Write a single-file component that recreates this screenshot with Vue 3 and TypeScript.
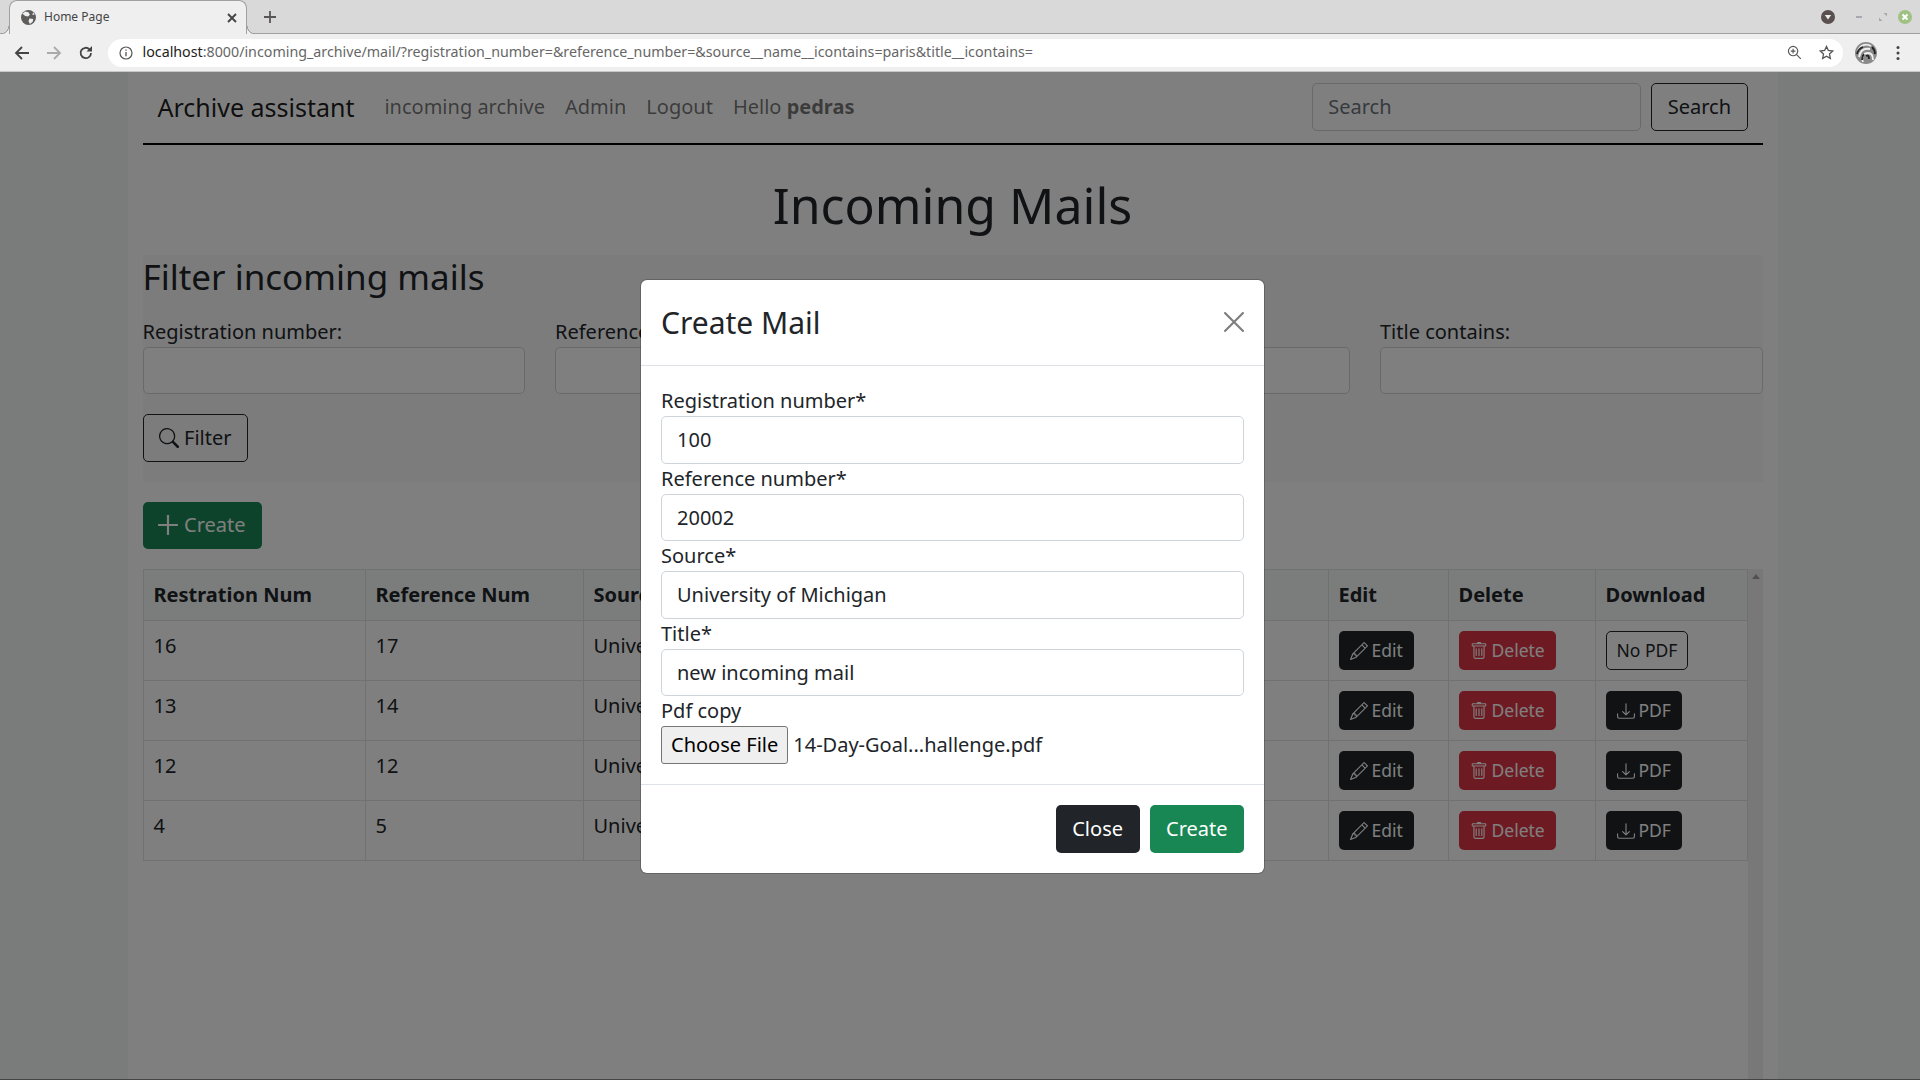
<script setup lang="ts">
interface MailRow {
  registration: string
  reference: string
  pdf: boolean
}

const mails: MailRow[] = [
  { registration: '16', reference: '17', pdf: false },
  { registration: '13', reference: '14', pdf: true },
  { registration: '12', reference: '12', pdf: true },
  { registration: '4', reference: '5', pdf: true },
]

const filterLabels = ['Registration number:', 'Reference number:', 'Source contains:', 'Title contains:']

const url = 'localhost:8000/incoming_archive/mail/?registration_number=&reference_number=&source__name__icontains=paris&title__icontains='

const fields = [
  { label: 'Registration number*', value: '100' },
  { label: 'Reference number*', value: '20002' },
  { label: 'Source*', value: 'University of Michigan' },
  { label: 'Title*', value: 'new incoming mail' },
]
</script>

<template>
  <div class="browser">
    <div class="tabstrip">
      <div class="tab">
        <svg class="tab__globe" viewBox="0 0 16 16" width="15" height="15">
          <circle cx="8" cy="8" r="8" fill="#5f5c5c" />
          <path d="M4.500 1.500l3.500 1 1.500 2.500-2 2-3-.5-3-2.500zM9 9l4 .5-.5 3-3 2.500-1.500-3zM13 2.500l1.500 2.500-2.500 0z" fill="#efefef" />
        </svg>
        <span class="tab__title">Home Page</span>
        <svg class="tab__close" viewBox="0 0 10 10" width="10" height="10">
          <path d="M1 1l8 8M9 1l-8 8" stroke="#444" stroke-width="1.900" />
        </svg>
      </div>
      <svg class="newtab" viewBox="0 0 12 12" width="12" height="12">
        <path d="M6 0v12M0 6h12" stroke="#5a5555" stroke-width="1.800" />
      </svg>
      <div class="winbtns">
        <svg class="winbtns__menu" viewBox="0 0 14 14" width="14" height="14">
          <circle cx="7" cy="7" r="7" fill="#5b5050" />
          <path d="M3.800 5h6.400L7 9.600z" fill="#eee" />
        </svg>
        <span class="winbtns__min" />
        <svg class="winbtns__max" viewBox="0 0 8 8" width="8" height="8">
          <path d="M0 8V4.500L3.500 8zM8 0v3.500L4.500 0z" fill="#a8a8b0" />
        </svg>
        <svg viewBox="0 0 14 14" width="14" height="14">
          <circle cx="7" cy="7" r="7" fill="#9fc283" />
          <path d="M4.500 4.500l5 5M9.500 4.500l-5 5" stroke="#fff" stroke-width="2" />
        </svg>
      </div>
    </div>

    <div class="toolbar">
      <svg class="tool" viewBox="0 0 16 16" width="16" height="16">
        <path d="M15 8H2M8 2L2 8l6 6" fill="none" stroke="#444" stroke-width="1.800" />
      </svg>
      <svg class="tool" viewBox="0 0 16 16" width="16" height="16">
        <path d="M1 8h13M8 2l6 6-6 6" fill="none" stroke="#aaa" stroke-width="1.800" />
      </svg>
      <svg class="tool" viewBox="0 0 16 16" width="16" height="16">
        <path d="M13 8a5.200 5.200 0 1 1-1.500-3.700" fill="none" stroke="#444" stroke-width="1.800" />
        <path d="M14 1v5.500H8.500z" fill="#444" />
      </svg>
      <div class="omnibox">
        <svg viewBox="0 0 14 14" width="14" height="14">
          <circle cx="7" cy="7" r="6" fill="none" stroke="#555" stroke-width="1.200" />
          <path d="M7 6v4.200M7 3.400v1.400" stroke="#555" stroke-width="1.300" />
        </svg>
        <span class="omnibox__url"><span class="omnibox__host">localhost</span>{{ url.slice(9) }}</span>
        <svg class="omnibox__zoom" viewBox="0 0 16 16" width="15" height="15">
          <circle cx="6.500" cy="6.500" r="5" fill="none" stroke="#555" stroke-width="1.200" />
          <path d="M10.200 10.200l4.500 4.500M6.500 4v5M4 6.500h5" stroke="#555" stroke-width="1.200" />
        </svg>
        <svg viewBox="0 0 16 16" width="15" height="15">
          <path d="M8 1.500l2 4.300 4.700.6-3.500 3.200.9 4.700L8 12l-4.100 2.300.9-4.700L1.300 6.400 6 5.800z" fill="none" stroke="#555" stroke-width="1.400" />
        </svg>
      </div>
      <svg class="avatar" viewBox="0 0 22 22" width="22" height="22">
        <circle cx="11" cy="11" r="11" fill="#8a8a8a" />
        <path d="M3 9c2-6 8-8 13-5M4 15c1-6 5-9 11-8M8 20c-2-5 0-9 5-9 4 0 5 3 5 7" fill="none" stroke="#f0f0f0" stroke-width="1.800" />
        <path d="M2 12c1-4 3-6 6-7M11 14c2-1 3 0 3 3M7 18c0-3 1-5 2-6M17 5c2 2 3 4 3 7" fill="none" stroke="#222" stroke-width="1.800" />
      </svg>
      <svg class="dots" viewBox="0 0 4 16" width="4" height="16">
        <circle cx="2" cy="2.500" r="1.500" fill="#444" />
        <circle cx="2" cy="8" r="1.500" fill="#444" />
        <circle cx="2" cy="13.500" r="1.500" fill="#444" />
      </svg>
    </div>

    <div class="viewport">
      <div class="page">
        <div class="container">
          <nav class="navbar">
            <a class="navbar__brand">Archive assistant</a>
            <a class="navbar__link">incoming archive</a>
            <a class="navbar__link">Admin</a>
            <a class="navbar__link">Logout</a>
            <span class="navbar__link">Hello <b>pedras</b></span>
            <form class="navbar__search">
              <input class="control navbar__input" placeholder="Search" />
              <button type="button" class="btn btn--outline">Search</button>
            </form>
          </nav>

          <h1 class="heading">Incoming Mails</h1>

          <section class="filter">
            <h2 class="filter__title">Filter incoming mails</h2>
            <div class="filter__grid">
              <div v-for="label in filterLabels" :key="label">
                <label class="field-label">{{ label }}</label>
                <input class="control" />
              </div>
            </div>
            <button type="button" class="btn btn--outline filter__btn">
              <svg class="icon" viewBox="0 0 16 16" width="20" height="20" fill="currentColor">
                <path d="M11.742 10.344a6.500 6.500 0 1 0-1.397 1.398h-.001c.03.04.062.078.098.115l3.850 3.850a1 1 0 0 0 1.415-1.414l-3.850-3.850a1.007 1.007 0 0 0-.115-.1zM12 6.500a5.500 5.500 0 1 1-11 0 5.500 5.500 0 0 1 11 0z" />
              </svg>
              Filter
            </button>
          </section>

          <button type="button" class="btn btn--green create">
            <svg class="icon" viewBox="0 0 16 16" width="22" height="22">
              <path d="M8 .8v14.400M.8 8h14.400" stroke="currentColor" stroke-width="1.600" />
            </svg>
            Create
          </button>

          <div class="table-wrap">
            <table class="table">
              <colgroup>
                <col style="width: 222px" />
                <col style="width: 218px" />
                <col style="width: 300px" />
                <col style="width: 303px" />
                <col style="width: 142px" />
                <col style="width: 120px" />
                <col style="width: 147px" />
                <col />
              </colgroup>
              <thead>
                <tr>
                  <th>Restration Num</th>
                  <th>Reference Num</th>
                  <th>Source</th>
                  <th>Title</th>
                  <th>Detail</th>
                  <th>Edit</th>
                  <th>Delete</th>
                  <th>Download</th>
                </tr>
              </thead>
              <tbody>
                <tr v-for="mail in mails" :key="mail.registration">
                  <td>{{ mail.registration }}</td>
                  <td>{{ mail.reference }}</td>
                  <td>University of Paris</td>
                  <td>Incoming mail</td>
                  <td><button type="button" class="btn btn--sm btn--green">Email</button></td>
                  <td>
                    <button type="button" class="btn btn--sm btn--dark">
                      <svg class="icon" viewBox="0 0 16 16" width="18" height="18" fill="currentColor">
                        <path d="M12.146.146a.5.5 0 0 1 .708 0l3 3a.5.5 0 0 1 0 .708l-10 10a.5.5 0 0 1-.168.11l-5 2a.5.5 0 0 1-.65-.65l2-5a.5.5 0 0 1 .11-.168l10-10zM11.207 2.500 13.500 4.793 14.793 3.500 12.500 1.207 11.207 2.500zm1.586 3L10.500 3.207 4 9.707V10h.5a.5.5 0 0 1 .5.5v.5h.5a.5.5 0 0 1 .5.5v.5h.293l6.500-6.500zm-9.761 5.175-.106.106-1.528 3.821 3.821-1.528.106-.106A.5.5 0 0 1 5 12.500V12h-.5a.5.5 0 0 1-.5-.5V11h-.5a.5.5 0 0 1-.468-.325z" />
                      </svg>
                      Edit
                    </button>
                  </td>
                  <td>
                    <button type="button" class="btn btn--sm btn--red">
                      <svg class="icon" viewBox="0 0 16 16" width="18" height="18" fill="currentColor">
                        <path d="M5.500 5.500A.5.5 0 0 1 6 6v6a.5.5 0 0 1-1 0V6a.5.5 0 0 1 .5-.5zm2.500 0a.5.5 0 0 1 .5.5v6a.5.5 0 0 1-1 0V6a.5.5 0 0 1 .5-.5zm3 .5a.5.5 0 0 0-1 0v6a.5.5 0 0 0 1 0V6z" />
                        <path fill-rule="evenodd" d="M14.500 3a1 1 0 0 1-1 1H13v9a2 2 0 0 1-2 2H5a2 2 0 0 1-2-2V4h-.5a1 1 0 0 1-1-1V2a1 1 0 0 1 1-1H6a1 1 0 0 1 1-1h2a1 1 0 0 1 1 1h3.500a1 1 0 0 1 1 1v1zM4.118 4 4 4.059V13a1 1 0 0 0 1 1h6a1 1 0 0 0 1-1V4.059L11.882 4H4.118zM2.500 3V2h11v1h-11z" />
                      </svg>
                      Delete
                    </button>
                  </td>
                  <td>
                    <button v-if="mail.pdf" type="button" class="btn btn--sm btn--dark">
                      <svg class="icon" viewBox="0 0 16 16" width="18" height="18" fill="currentColor">
                        <path d="M.5 9.900a.5.5 0 0 1 .5.5v2.500a1 1 0 0 0 1 1h12a1 1 0 0 0 1-1v-2.500a.5.5 0 0 1 1 0v2.500a2 2 0 0 1-2 2H2a2 2 0 0 1-2-2v-2.500a.5.5 0 0 1 .5-.5z" />
                        <path d="M7.646 11.854a.5.5 0 0 0 .708 0l3-3a.5.5 0 0 0-.708-.708L8.500 10.293V1.500a.5.5 0 0 0-1 0v8.793L5.354 8.146a.5.5 0 1 0-.708.708l3 3z" />
                      </svg>
                      PDF
                    </button>
                    <button v-else type="button" class="btn btn--sm btn--outline">No PDF</button>
                  </td>
                </tr>
              </tbody>
            </table>
            <div class="scrollbar"><span class="scrollbar__up" /></div>
          </div>
        </div>
      </div>

      <div class="backdrop" />

      <div class="modal">
        <header class="modal__header">
          <h5 class="modal__title">Create Mail</h5>
          <svg class="modal__close" viewBox="0 0 16 16" width="20" height="20">
            <path d="M.3.3l15.400 15.400M15.700.3L.3 15.700" stroke="#000" stroke-width="1.700" />
          </svg>
        </header>
        <div class="modal__body">
          <div v-for="field in fields" :key="field.label">
            <label class="modal__label">{{ field.label }}</label>
            <input class="control" :value="field.value" />
          </div>
          <label class="modal__label">Pdf copy</label>
          <div class="file">
            <button type="button" class="file__btn">Choose File</button>
            <span class="file__name">14-Day-Goal...hallenge.pdf</span>
          </div>
        </div>
        <footer class="modal__footer">
          <button type="button" class="btn btn--dark">Close</button>
          <button type="button" class="btn btn--green">Create</button>
        </footer>
      </div>
    </div>
  </div>
</template>

<style>
html, body {
  margin: 0;
  height: 100%;
  overflow: hidden;
}
</style>

<style scoped>
.browser {
  width: 1920px;
  height: 1080px;
  display: flex;
  flex-direction: column;
  font-family: "Noto Sans", sans-serif;
  font-size: 20px;
  line-height: 1.5;
  color: #212529;
  overflow: hidden;
}

.tabstrip {
  height: 34px;
  flex: none;
  display: flex;
  align-items: center;
  background: #d9d9d9;
  border-bottom: 1px solid #a0a0a0;
  box-sizing: border-box;
  padding-left: 9px;
}

.tab {
  position: relative;
  width: 238px;
  height: 34px;
  box-sizing: border-box;
  display: flex;
  align-items: center;
  padding: 0 9px 0 11px;
  background: #efefef;
  border: 1px solid #a0a0a0;
  border-bottom: none;
  border-radius: 8px 8px 0 0;
  align-self: flex-start;
}

.tab::before,
.tab::after {
  content: "";
  position: absolute;
  bottom: 0;
  width: 8px;
  height: 8px;
}

.tab::before {
  left: -9px;
  background: radial-gradient(circle at 0 0, #d9d9d9 7px, #a0a0a0 7.500px, #a0a0a0 8px, #efefef 8.500px);
}

.tab::after {
  right: -9px;
  background: radial-gradient(circle at 100% 0, #d9d9d9 7px, #a0a0a0 7.500px, #a0a0a0 8px, #efefef 8.500px);
}

.tab__title {
  margin-left: 8px;
  padding-bottom: 2px;
  flex: 1;
  font-size: 12px;
  color: #444;
}

.newtab {
  margin-left: 17px;
}

.winbtns {
  margin-left: auto;
  display: flex;
  align-items: center;
  padding-right: 8px;
}

.winbtns__min {
  width: 6px;
  height: 2px;
  margin-left: 21px;
  background: #a8a8b0;
}

.winbtns__max {
  margin: 0 11px 0 17px;
}

.toolbar {
  height: 38px;
  flex: none;
  display: flex;
  align-items: center;
  box-sizing: border-box;
  background: #efefef;
  border-bottom: 1px solid #c8c8c8;
  padding: 0 14px;
  gap: 16px;
}

.omnibox {
  width: 1735px;
  height: 28px;
  flex: none;
  box-sizing: border-box;
  margin-left: -2px;
  display: flex;
  align-items: center;
  gap: 10px;
  padding: 0 9px 0 10.500px;
  background: #fff;
  border-radius: 14px;
}

.omnibox__url {
  flex: 1;
  padding-bottom: 2px;
  font-size: 14.260px;
  color: #666;
  white-space: nowrap;
}

.omnibox__host {
  color: #222;
}

.omnibox__zoom {
  margin-right: 7.500px;
}

.avatar {
  flex: none;
  margin-left: -4px;
}

.dots {
  flex: none;
  margin-left: 3px;
}

.viewport {
  position: relative;
  flex: 1;
  overflow: hidden;
  box-sizing: border-box;
  border-bottom: 1px solid #444;
}

.page {
  height: 100%;
  padding-right: 15px;
  background: #f5f9f7;
}

.container {
  width: 1620px;
  height: 100%;
  margin: 0 auto;
  padding: 0 15px;
  background: #fff;
}

.navbar {
  height: 73px;
  box-sizing: border-box;
  display: flex;
  align-items: center;
  padding: 0 15px;
  border-bottom: 2px solid #000;
}

.navbar__brand {
  font-size: 25px;
  margin-right: 20px;
  color: rgba(0, 0, 0, 0.9);
}

.navbar__link {
  padding: 0 10px 2px;
  color: rgba(0, 0, 0, 0.55);
}

.navbar__search {
  margin-left: auto;
  margin-bottom: 1.500px;
  display: flex;
  gap: 10px;
}

.control {
  display: block;
  width: 100%;
  box-sizing: border-box;
  height: 47.500px;
  padding: 7.500px 15px;
  font: inherit;
  color: #212529;
  background: #fff;
  border: 1px solid #ced4da;
  border-radius: 5px;
  outline: none;
}

.control.navbar__input {
  width: 329px;
}

.control::placeholder {
  color: #6c757d;
}

.btn {
  font: inherit;
  height: 47.500px;
  box-sizing: border-box;
  padding: 0 15.500px;
  border: 1px solid transparent;
  border-radius: 5px;
  display: inline-flex;
  align-items: center;
  gap: 5px;
  white-space: nowrap;
}

.btn--sm {
  height: 39px;
  padding: 0 10px;
  font-size: 17.500px;
  gap: 4px;
}

.btn--outline {
  background: transparent;
  color: #212529;
  border-color: #212529;
}

.btn--green {
  background: #198754;
  color: #fff;
}

.btn--dark {
  background: #212529;
  color: #fff;
}

.btn--red {
  background: #dc3545;
  color: #fff;
}

.heading {
  margin: 30px 0 20px;
  font-size: 50px;
  font-weight: 400;
  line-height: 60px;
  text-align: center;
}

.filter {
  height: 227px;
  box-sizing: border-box;
  background: #f8f9fa;
}

.filter__title {
  margin: 0;
  height: 61.500px;
  font-size: 35px;
  font-weight: 400;
  line-height: 43px;
}

.filter__grid {
  display: grid;
  grid-template-columns: repeat(4, 1fr);
  gap: 30px;
}

.field-label {
  display: block;
}

.filter__btn {
  margin-top: 20px;
}

.create {
  margin: 19.500px 0 20px;
  padding-left: 13.500px;
}

.table-wrap {
  display: flex;
  height: 520px;
}

.table {
  width: 1605.500px;
  height: 291px;
  flex: none;
  border-collapse: collapse;
  table-layout: fixed;
}

.table th,
.table td {
  padding: 10px;
  border: 1px solid #dee2e6;
  text-align: left;
  vertical-align: top;
  white-space: nowrap;
  overflow: hidden;
}

.table th {
  height: 30px;
  font-weight: 700;
  background: #f7fafa;
}

.scrollbar {
  flex: 1;
  position: relative;
  background: #f1f1f1;
}

.scrollbar__up {
  position: absolute;
  top: 5px;
  left: 4px;
  border-left: 4px solid transparent;
  border-right: 4px solid transparent;
  border-bottom: 5px solid #a3a3a3;
}

.backdrop {
  position: absolute;
  inset: 0;
  background: #000;
  opacity: 0.5;
}

.modal {
  position: absolute;
  top: 208px;
  left: 641px;
  width: 623px;
  box-sizing: border-box;
  background: #fff;
  border-radius: 6px;
  box-shadow: 0 0 0 1px rgba(0, 0, 0, 0.2);
}

.modal__header {
  height: 86px;
  box-sizing: border-box;
  display: flex;
  align-items: center;
  justify-content: space-between;
  padding: 0 20px;
  border-bottom: 1px solid #dee2e6;
}

.modal__title {
  margin: 0;
  font-size: 30px;
  font-weight: 400;
  line-height: 45px;
}

.modal__close {
  margin-bottom: 2px;
  opacity: 0.5;
}

.modal__body {
  padding: 20px;
}

.modal__label {
  display: block;
  height: 30px;
}

.file {
  display: flex;
  align-items: center;
  height: 38px;
}

.file__btn {
  height: 38px;
  box-sizing: border-box;
  padding: 0 9px;
  font: inherit;
  color: #000;
  background: #efefef;
  border: 1px solid #767676;
  border-radius: 3px;
}

.file__name {
  margin-left: 5px;
}

.modal__footer {
  display: flex;
  justify-content: flex-end;
  gap: 10px;
  padding: 20px;
  border-top: 1px solid #dee2e6;
}
</style>
